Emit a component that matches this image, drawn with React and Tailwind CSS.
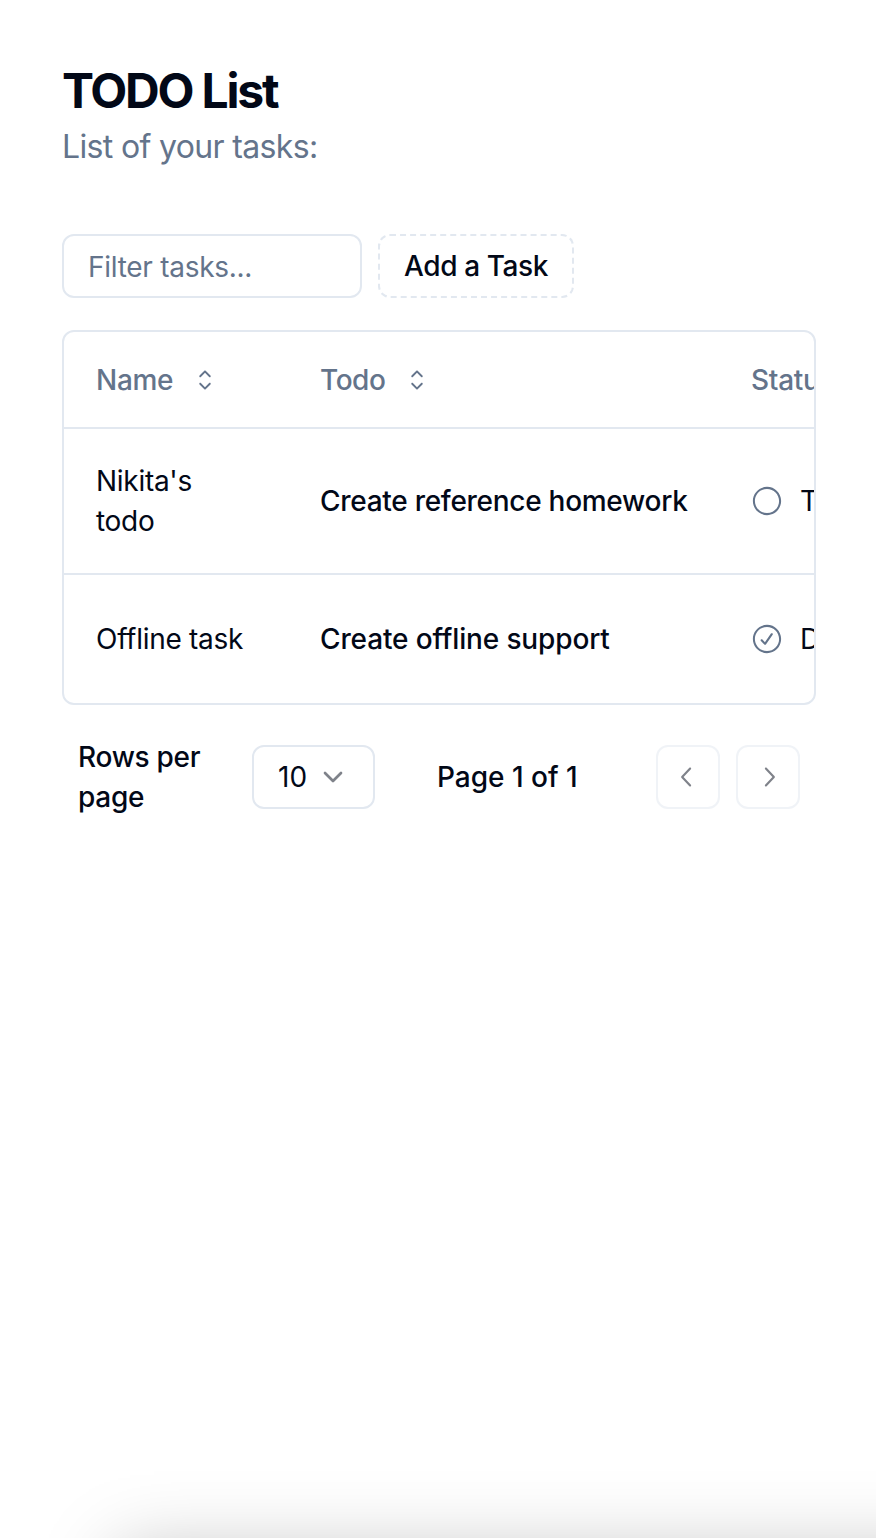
import { RxCaretSort, RxCheckCircled, RxChevronLeft, RxChevronRight, RxCircle } from "react-icons/rx";
import { ChevronDown } from "lucide-react";

const tasks = [
  { name: "Nikita's todo", todo: "Create reference homework", status: "Todo", icon: RxCircle, row: "h-[146px] border-b-2 border-[#e2e8f0]", tracking: "tracking-[-0.28px]" },
  { name: "Offline task", todo: "Create offline support", status: "Done", icon: RxCheckCircled, row: "h-[128px]", tracking: "tracking-[-0.14px]" },
];

function HeaderCell({ children, className }) {
  return (
    <div className={`flex shrink-0 items-center font-medium text-[#64748b] ${className}`}>
      <span>{children}</span>
      <RxCaretSort className="ml-4 size-8" />
    </div>
  );
}

export default function App() {
  return (
    <div className="relative flex h-[1538px] w-[876px] flex-col overflow-hidden bg-white pt-[59px] pr-[60px] pl-[62px] font-[Inter,sans-serif] text-[28px] leading-10 tracking-[-0.28px] text-[#020817]">
      <header>
        <h1 className="text-[48px] leading-[64px] font-bold tracking-[-2.2px]">TODO List</h1>
        <p className="text-[32px] leading-[48px] tracking-[-0.65px] text-[#64748b]">List of your tasks:</p>
      </header>

      <div className="mt-[63px] flex gap-4">
        <input
          className="h-16 w-[300px] rounded-xl border-2 border-[#e2e8f0] px-6 pt-0.5 outline-none placeholder:text-[#64748b]"
          placeholder="Filter tasks..."
        />
        <button className="h-16 w-[196px] rounded-xl border-2 border-dashed border-[#e2e8f0] font-medium tracking-[-0.4px] whitespace-nowrap">
          Add a Task
        </button>
      </div>

      <div className="mt-8 h-[375px] overflow-hidden rounded-xl border-2 border-[#e2e8f0]">
        <div className="w-[1000px]">
          <div className="flex h-[97px] border-b-2 border-[#e2e8f0] pl-8">
            <HeaderCell className="w-[224px]">Name</HeaderCell>
            <HeaderCell className="w-[431px] tracking-[-0.45px]">Todo</HeaderCell>
            <HeaderCell className="w-[240px]">Status</HeaderCell>
          </div>
          {tasks.map(({ name, todo, status, icon: Icon, row, tracking }) => (
            <div key={name} className={`flex items-center pl-8 ${row}`}>
              <div className="w-[224px] shrink-0 pr-[64px]">{name}</div>
              <div className={`w-[431px] shrink-0 font-medium whitespace-nowrap ${tracking}`}>{todo}</div>
              <div className="flex shrink-0 items-center gap-[17px]">
                <Icon className="size-8 text-[#64748b]" />
                <span>{status}</span>
              </div>
            </div>
          ))}
        </div>
      </div>

      <div className="mt-8 flex h-20 items-center px-4 font-medium">
        <p className="w-[158px]">Rows per page</p>
        <button className="ml-4 flex h-16 w-[123px] items-center rounded-xl border-2 border-[#e2e8f0] pl-6 font-normal tracking-normal">
          <span>10</span>
          <ChevronDown className="ml-2.5 size-8 opacity-50" />
        </button>
        <p className="ml-[62px] tracking-normal whitespace-nowrap">Page 1 of 1</p>
        <div className="ml-auto flex gap-4">
          <button className="flex size-16 items-center justify-center rounded-xl border-2 border-[#e2e8f0] opacity-50">
            <RxChevronLeft className="size-8" />
          </button>
          <button className="flex size-16 items-center justify-center rounded-xl border-2 border-[#e2e8f0] opacity-50">
            <RxChevronRight className="size-8" />
          </button>
        </div>
      </div>

      <div className="absolute top-[1553px] left-[118px] h-[300px] w-[1000px] shadow-[0_0_72px_rgba(0,0,0,0.25)]" />
    </div>
  );
}
